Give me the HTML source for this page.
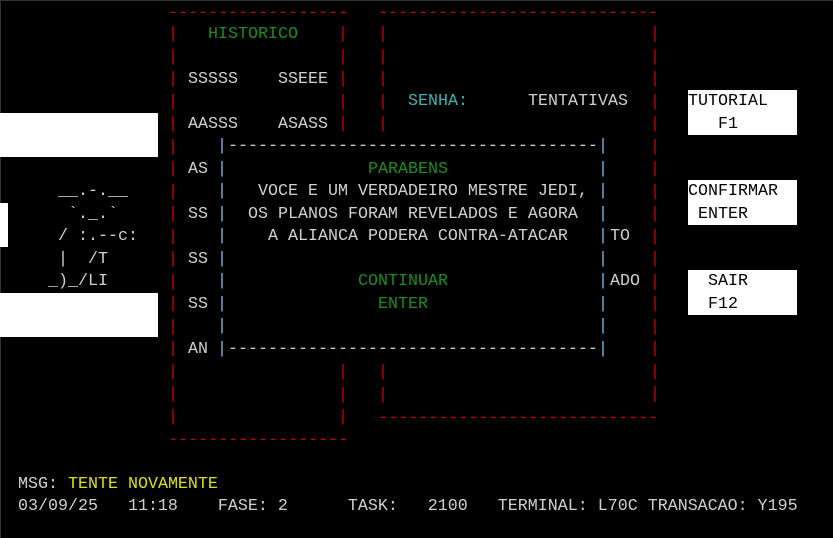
<!DOCTYPE html>
<html><head><meta charset="utf-8"><style>
html,body{margin:0;padding:0;background:#000;width:833px;height:538px;overflow:hidden}
body{position:relative}
.f{position:absolute;left:0;top:0;width:833px;height:538px;box-shadow:inset 1px 1px 0 #333}
.t{position:absolute;white-space:pre;font-family:"Liberation Mono","DejaVu Sans Mono",monospace;font-size:16.67px;line-height:22.5px;color:#d0d0d0;margin:0}
.r{color:#c80000}.g{color:#1a8f1a}.c{color:#3bb3b3}.y{color:#e0e000}.b{color:#7fb2df}.k{color:#000}
.w{position:absolute;background:#fff}
</style></head><body>
<div class="f"></div>
<div class="w" style="left:0;top:113px;width:158px;height:44px"></div>
<div class="w" style="left:0;top:203px;width:8px;height:44px"></div>
<div class="w" style="left:0;top:293px;width:158px;height:44px"></div>
<div class="w" style="left:688px;top:90px;width:109px;height:45px"></div>
<div class="w" style="left:688px;top:180px;width:109px;height:45px"></div>
<div class="w" style="left:688px;top:270px;width:109px;height:45px"></div>

<div class="t r" style="left:168px;top:3px">------------------</div>
<div class="t r" style="left:378px;top:3px">----------------------------</div>
<div class="t r" style="left:168px;top:430px">------------------</div>
<div class="t r" style="left:378px;top:408px">----------------------------</div>
<div class="t r" style="left:168px;top:24px">|
|
|
|
|
|
|
|
|
|
|
|
|
|
|
|
|
|</div>
<div class="t r" style="left:338px;top:24px">|
|
|
|
|</div>
<div class="t r" style="left:338px;top:362px">|
|
|</div>
<div class="t r" style="left:378px;top:24px">|
|
|
|
|</div>
<div class="t r" style="left:378px;top:362px">|
|</div>
<div class="t r" style="left:650px;top:24px">|
|
|
|
|
|
|
|
|
|
|
|
|
|
|
|
|</div>

<div class="t g" style="left:208px;top:24px">HISTORICO</div>
<div class="t" style="left:188px;top:69px">SSSSS    SSEEE</div>
<div class="t" style="left:188px;top:114px">AASSS    ASASS</div>
<div class="t" style="left:188px;top:159px">AS</div>
<div class="t" style="left:188px;top:204px">SS</div>
<div class="t" style="left:188px;top:249px">SS</div>
<div class="t" style="left:188px;top:294px">SS</div>
<div class="t" style="left:188px;top:339px">AN</div>
<div class="t c" style="left:408px;top:91px">SENHA:</div>
<div class="t" style="left:528px;top:91px">TENTATIVAS</div>
<div class="t" style="left:610px;top:226px">TO</div>
<div class="t" style="left:610px;top:271px">ADO</div>

<div class="t b" style="left:217px;top:136px">|
|
|
|
|
|
|
|
|
|</div>
<div class="t b" style="left:598px;top:136px">|
|
|
|
|
|
|
|
|
|</div>
<div class="t" style="left:228px;top:136px">-------------------------------------</div>
<div class="t" style="left:228px;top:339px">-------------------------------------</div>
<div class="t g" style="left:368px;top:159px">PARABENS</div>
<div class="t" style="left:258px;top:181px">VOCE E UM VERDADEIRO MESTRE JEDI,</div>
<div class="t" style="left:248px;top:204px">OS PLANOS FORAM REVELADOS E AGORA</div>
<div class="t" style="left:268px;top:226px">A ALIANCA PODERA CONTRA-ATACAR</div>
<div class="t g" style="left:358px;top:271px">CONTINUAR</div>
<div class="t g" style="left:378px;top:294px">ENTER</div>

<div class="t" style="left:58px;top:181px">__.-.__</div>
<div class="t" style="left:68px;top:204px">`._.`</div>
<div class="t" style="left:58px;top:226px">/ :.--c:</div>
<div class="t" style="left:58px;top:249px">|  /T</div>
<div class="t" style="left:48px;top:271px">_)_/LI</div>

<div class="t k" style="left:688px;top:91px">TUTORIAL</div>
<div class="t k" style="left:718px;top:114px">F1</div>
<div class="t k" style="left:688px;top:181px">CONFIRMAR</div>
<div class="t k" style="left:698px;top:204px">ENTER</div>
<div class="t k" style="left:708px;top:271px">SAIR</div>
<div class="t k" style="left:708px;top:294px">F12</div>

<div class="t" style="left:18px;top:474px">MSG: <span class="y">TENTE NOVAMENTE</span></div>
<div class="t" style="left:18px;top:496px">03/09/25   11:18    FASE: 2      TASK:   2100   TERMINAL: L70C TRANSACAO: Y195</div>
</body></html>
